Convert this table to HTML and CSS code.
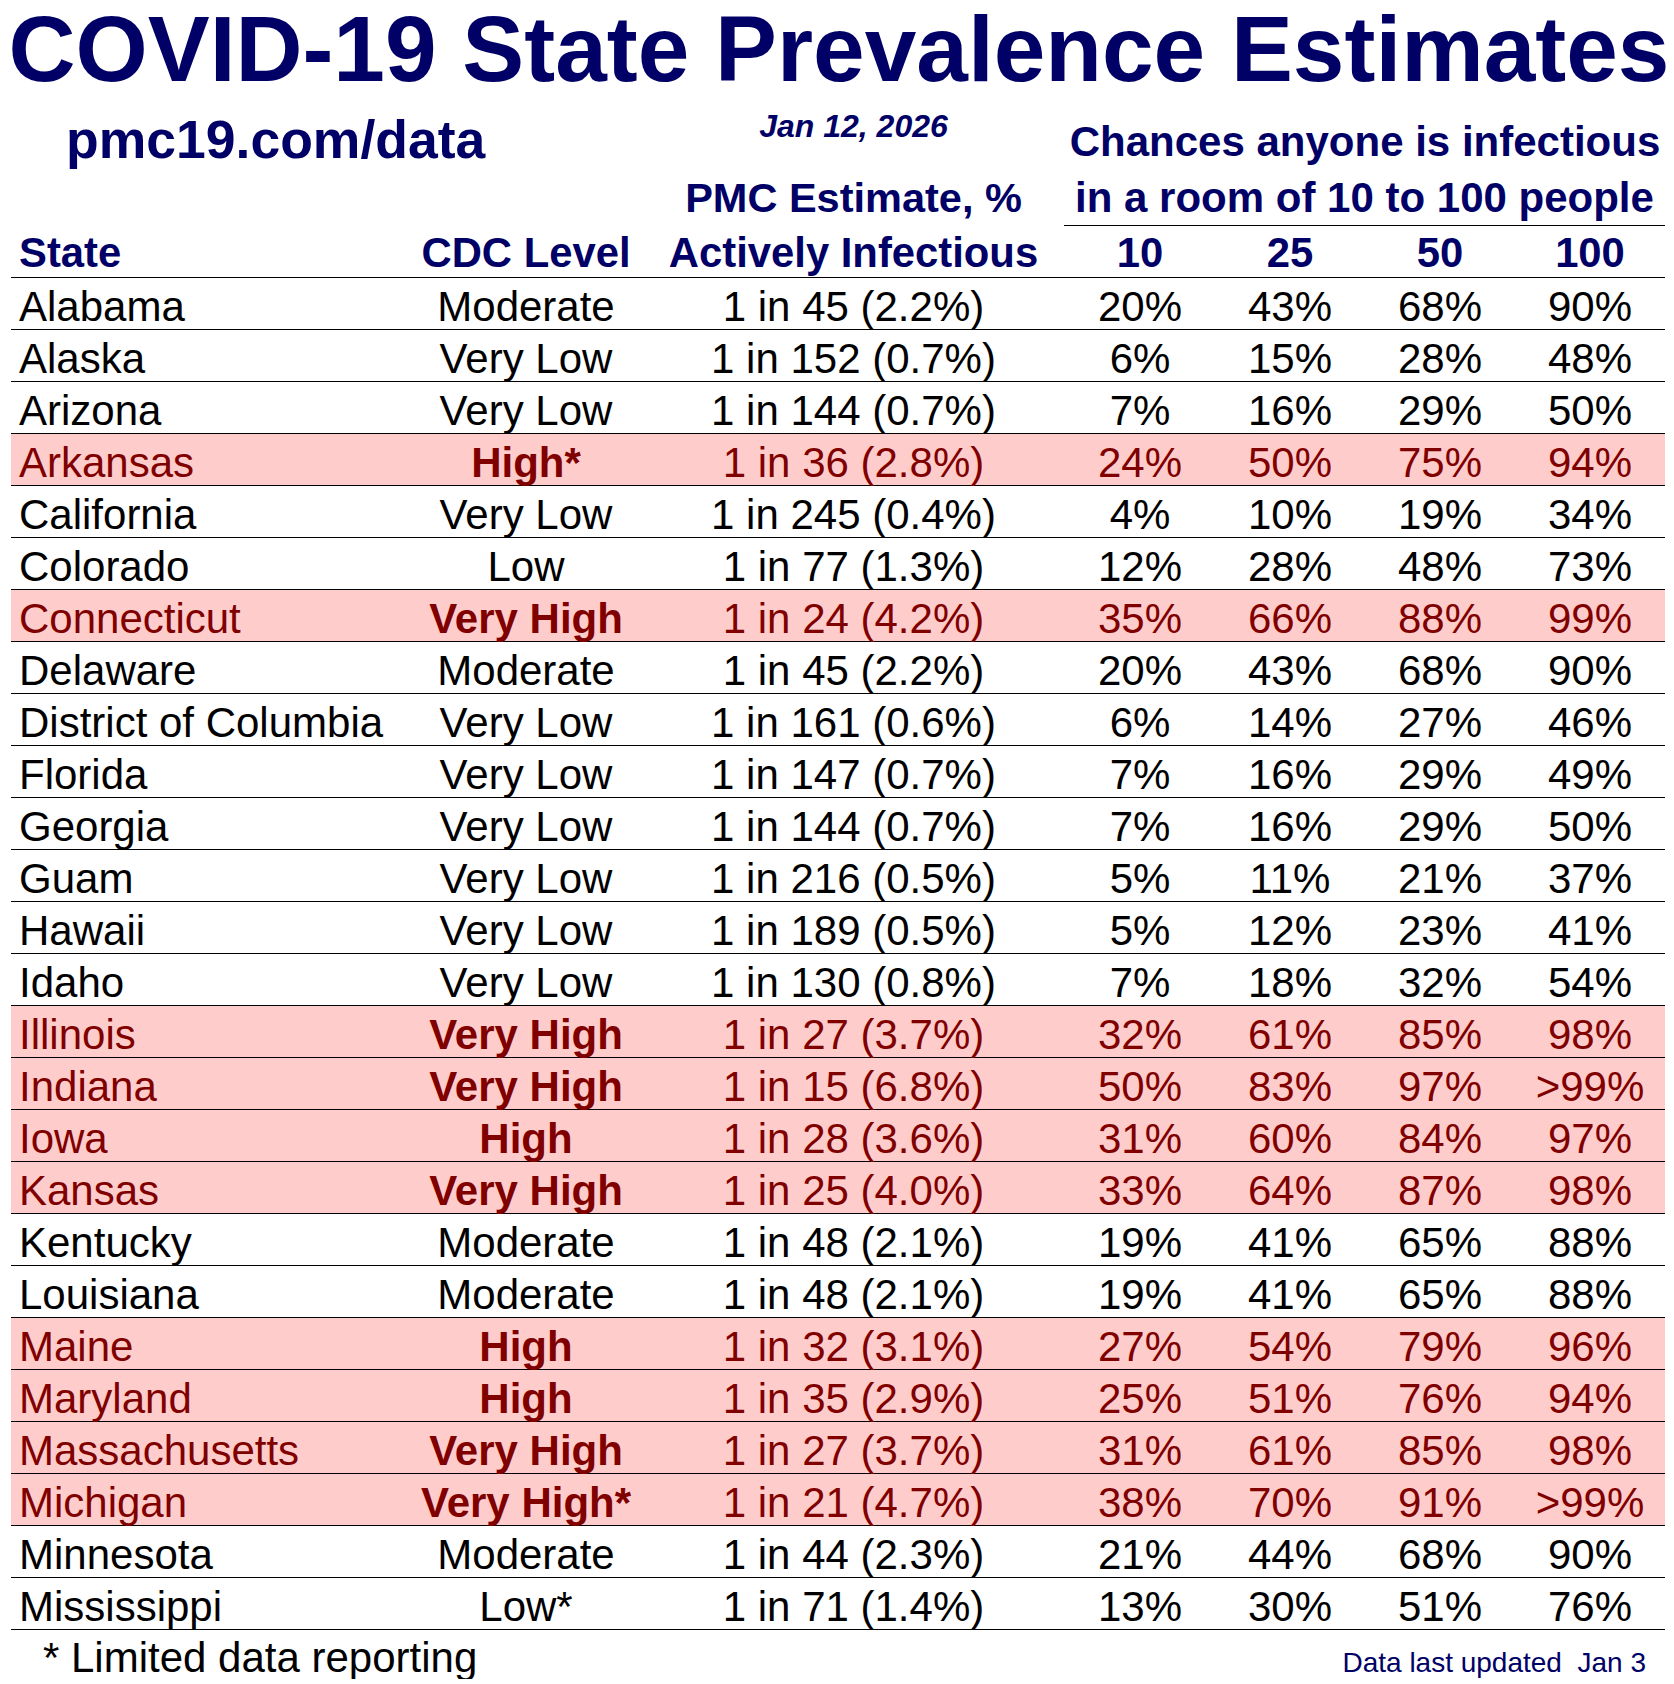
FILE: index.html
```html
<!DOCTYPE html>
<html lang="en">
<head>
<meta charset="utf-8">
<title>COVID-19 State Prevalence Estimates</title>
<link rel="stylesheet" href="styles.css">
</head>
<body>
<div class="page">
  <h1 class="title">COVID-19 State Prevalence Estimates</h1>
  <div class="grid head">
    <div class="site">pmc19.com/data</div>
    <div class="date">Jan 12, 2026</div>
    <div class="chances">Chances anyone is infectious</div>
    <div class="pmc">PMC Estimate, %</div>
    <div class="room">in a room of 10 to 100 people</div>
    <div class="h h-left">State</div>
    <div class="h">CDC Level</div>
    <div class="h">Actively Infectious</div>
    <div class="h">10</div>
    <div class="h">25</div>
    <div class="h">50</div>
    <div class="h">100</div>
  </div>
  <div class="grid body" id="rows"></div>
  <div class="foot">
    <span class="note">* Limited data reporting</span>
    <span class="updated">Data last updated&nbsp; Jan 3</span>
  </div>
</div>
<script src="app.js"></script>
</body>
</html>
```
FILE: app.js
```js
const data = [
  ["Alabama","Moderate","1 in 45 (2.2%)","20%","43%","68%","90%",0],
  ["Alaska","Very Low","1 in 152 (0.7%)","6%","15%","28%","48%",0],
  ["Arizona","Very Low","1 in 144 (0.7%)","7%","16%","29%","50%",0],
  ["Arkansas","High*","1 in 36 (2.8%)","24%","50%","75%","94%",1],
  ["California","Very Low","1 in 245 (0.4%)","4%","10%","19%","34%",0],
  ["Colorado","Low","1 in 77 (1.3%)","12%","28%","48%","73%",0],
  ["Connecticut","Very High","1 in 24 (4.2%)","35%","66%","88%","99%",1],
  ["Delaware","Moderate","1 in 45 (2.2%)","20%","43%","68%","90%",0],
  ["District of Columbia","Very Low","1 in 161 (0.6%)","6%","14%","27%","46%",0],
  ["Florida","Very Low","1 in 147 (0.7%)","7%","16%","29%","49%",0],
  ["Georgia","Very Low","1 in 144 (0.7%)","7%","16%","29%","50%",0],
  ["Guam","Very Low","1 in 216 (0.5%)","5%","11%","21%","37%",0],
  ["Hawaii","Very Low","1 in 189 (0.5%)","5%","12%","23%","41%",0],
  ["Idaho","Very Low","1 in 130 (0.8%)","7%","18%","32%","54%",0],
  ["Illinois","Very High","1 in 27 (3.7%)","32%","61%","85%","98%",1],
  ["Indiana","Very High","1 in 15 (6.8%)","50%","83%","97%",">99%",1],
  ["Iowa","High","1 in 28 (3.6%)","31%","60%","84%","97%",1],
  ["Kansas","Very High","1 in 25 (4.0%)","33%","64%","87%","98%",1],
  ["Kentucky","Moderate","1 in 48 (2.1%)","19%","41%","65%","88%",0],
  ["Louisiana","Moderate","1 in 48 (2.1%)","19%","41%","65%","88%",0],
  ["Maine","High","1 in 32 (3.1%)","27%","54%","79%","96%",1],
  ["Maryland","High","1 in 35 (2.9%)","25%","51%","76%","94%",1],
  ["Massachusetts","Very High","1 in 27 (3.7%)","31%","61%","85%","98%",1],
  ["Michigan","Very High*","1 in 21 (4.7%)","38%","70%","91%",">99%",1],
  ["Minnesota","Moderate","1 in 44 (2.3%)","21%","44%","68%","90%",0],
  ["Mississippi","Low*","1 in 71 (1.4%)","13%","30%","51%","76%",0]
];
const rows = document.getElementById("rows");
data.forEach(r => {
  const hot = r[7] === 1;
  r.slice(0, 7).forEach((v, i) => {
    const c = document.createElement("div");
    c.className = "c" + (i === 0 ? " c-left" : "") + (hot ? " hot" : "") + (hot && i === 1 ? " lvl" : "");
    c.textContent = v;
    rows.appendChild(c);
  });
});
```
FILE: styles.css
```css
html, body {
  margin: 0;
  padding: 0;
  background: #ffffff;
}
body {
  font-family: "Liberation Sans", Arial, sans-serif;
  color: #000000;
}
.page {
  width: 1674px;
}
.title {
  margin: 0;
  padding-top: 3px;
  padding-left: 4px;
  font-size: 92.8px;
  line-height: 93px;
  font-weight: bold;
  color: #000066;
  text-align: center;
  white-space: nowrap;
}
.grid {
  margin-left: 11px;
  width: 1654px;
  display: grid;
  grid-template-columns: 399px 232px 423px 150px 150px 150px 150px;
}
.head {
  grid-template-rows: 74px 56px 52px;
  color: #000066;
  font-weight: bold;
}
.site {
  grid-column: 1 / 3;
  grid-row: 1;
  padding-left: 55px;
  padding-top: 17px;
  font-size: 53.5px;
  line-height: 53px;
}
.date {
  grid-column: 3;
  grid-row: 1;
  padding-top: 14px;
  font-size: 32px;
  line-height: 32px;
  font-style: italic;
  text-align: center;
}
.chances {
  grid-column: 4 / 8;
  grid-row: 1;
  padding-top: 25px;
  font-size: 42px;
  line-height: 42px;
  text-align: center;
  white-space: nowrap;
}
.pmc {
  grid-column: 3;
  grid-row: 2;
  padding-top: 7px;
  font-size: 41.5px;
  line-height: 41px;
  text-align: center;
}
.room {
  grid-column: 4 / 8;
  grid-row: 2;
  padding-top: 7px;
  font-size: 42px;
  line-height: 42px;
  text-align: center;
  white-space: nowrap;
  border-bottom: 1px solid #000000;
  margin-left: -1px;
}
.h {
  grid-row: 3;
  padding-top: 6px;
  font-size: 41.8px;
  line-height: 41px;
  text-align: center;
  white-space: nowrap;
  border-bottom: 1px solid #000000;
}
.h-left {
  grid-column: 1;
  text-align: left;
  padding-left: 8px;
}
.body {
  grid-auto-rows: 52px;
}
.c {
  padding-top: 8px;
  font-size: 42px;
  line-height: 41px;
  text-align: center;
  white-space: nowrap;
  border-bottom: 1px solid #000000;
}
.c-left {
  text-align: left;
  padding-left: 8px;
}
.hot {
  background: #ffcccc;
  color: #800000;
}
.lvl {
  font-weight: bold;
}
.foot {
  display: flex;
  align-items: baseline;
  justify-content: space-between;
  padding-top: 7px;
  padding-left: 43px;
  padding-right: 28px;
}
.note {
  font-size: 42px;
  line-height: 41px;
}
.updated {
  font-size: 28px;
  color: #000066;
}
```
